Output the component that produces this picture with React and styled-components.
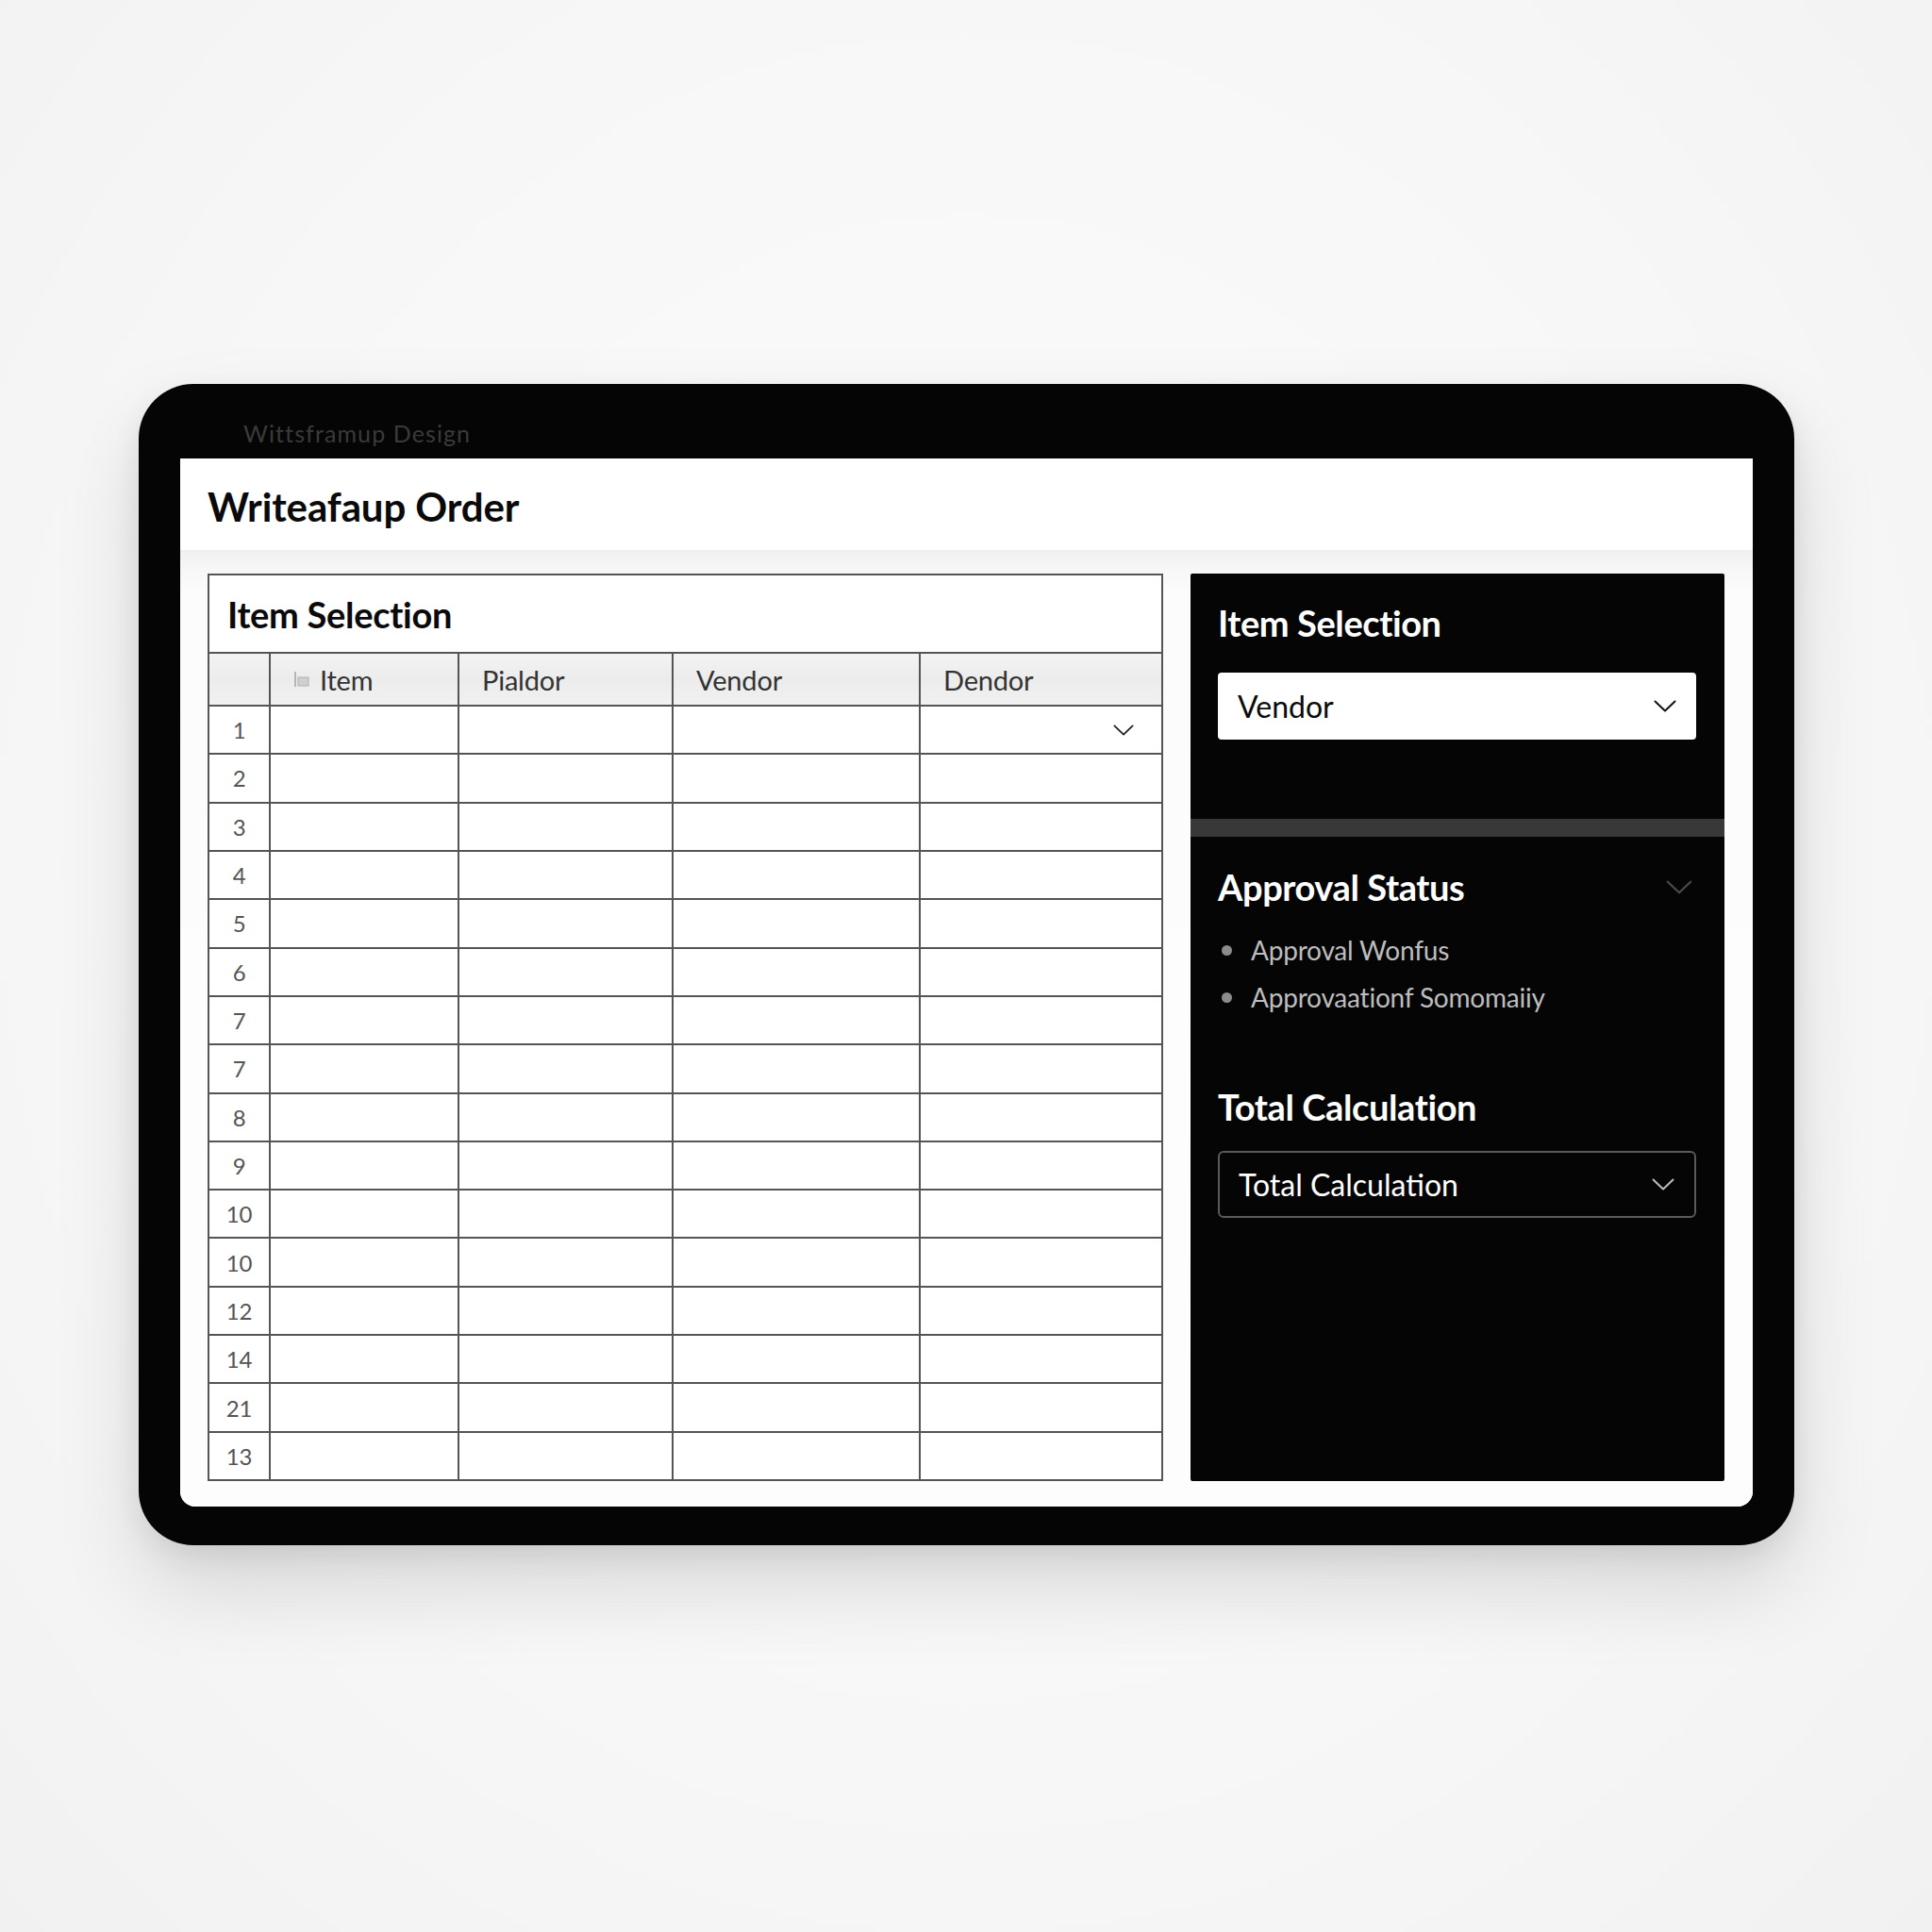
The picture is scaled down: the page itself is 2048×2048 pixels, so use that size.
import styled, { createGlobalStyle } from "styled-components";

const GlobalStyle = createGlobalStyle`
  html, body {
    margin: 0;
    padding: 0;
    background: #f6f6f6;
    font-family: Lato, "Open Sans", "Liberation Sans", sans-serif;
  }
  * { box-sizing: border-box; }
`;

const Page = styled.div`
  width: 2048px;
  height: 2048px;
  padding: 407px 0 0 147px;
  background: radial-gradient(ellipse at 50% 45%, #fcfcfc 0%, #f7f7f7 60%, #f1f1f1 100%);
`;

const Frame = styled.div`
  width: 1755px;
  height: 1231px;
  background: #050505;
  border-radius: 58px;
  padding: 0 44px 41px 44px;
  display: flex;
  flex-direction: column;
  box-shadow: 0 45px 90px rgba(0, 0, 0, 0.13), 0 12px 30px rgba(0, 0, 0, 0.08);
`;

const TopBar = styled.div`
  height: 79px;
  flex: none;
  padding: 38px 0 0 67px;
  font-size: 25px;
  line-height: 28px;
  color: #3a3a3a;
  letter-spacing: 1.1px;
`;

const Screen = styled.div`
  flex: 1;
  background: #fff;
  border-radius: 0 0 16px 16px;
  display: flex;
  flex-direction: column;
  overflow: hidden;
`;

const TitleBar = styled.div`
  height: 97px;
  flex: none;
  padding: 30px 0 0 29px;
`;

const Title = styled.h1`
  margin: 0;
  font-size: 42px;
  line-height: 1;
  font-weight: 700;
  color: #0a0a0a;
  letter-spacing: -0.1px;
`;

const Body = styled.div`
  flex: 1;
  display: flex;
  gap: 29px;
  padding: 25px 30px 27px 29px;
  background: linear-gradient(#f0f0f0 0px, #f7f7f7 22px, #fcfcfc 45px, #fdfdfd 100%);
`;

const Sheet = styled.div`
  width: 1013px;
  flex: none;
  background: #fff;
  border: 2px solid #555;
  display: flex;
  flex-direction: column;
`;

const SheetTitle = styled.div`
  height: 83px;
  flex: none;
  display: flex;
  align-items: center;
  padding-left: 19px;
  border-bottom: 2px solid #555;
  font-size: 38px;
  font-weight: 700;
  color: #0a0a0a;
  letter-spacing: -0.3px;
`;

const Row = styled.div`
  display: grid;
  grid-template-columns: 65px 200px 227px 262px 1fr;
  flex: ${(p) => (p.$head ? "none" : "1")};
  height: ${(p) => (p.$head ? "56px" : "auto")};
  border-bottom: ${(p) => (p.$last ? "none" : "2px solid #555")};
  background: ${(p) =>
    p.$head ? "linear-gradient(#f3f3f3, #ececec 50%, #f1f1f1)" : "#fff"};
`;

const Cell = styled.div`
  display: flex;
  align-items: center;
  justify-content: ${(p) => (p.$num ? "center" : "flex-start")};
  gap: 8px;
  padding-left: ${(p) => (p.$num ? "0" : "24px")};
  padding-right: ${(p) => (p.$num ? "0" : "29px")};
  border-right: ${(p) => (p.$end ? "none" : "2px solid #555")};
  font-size: ${(p) => (p.$num ? "24px" : "29px")};
  color: ${(p) => (p.$num ? "#555" : "#333")};
  letter-spacing: -0.2px;
`;

const RowChevron = styled.span`
  margin-left: auto;
  display: flex;
  color: #222;
`;

const Panel = styled.div`
  flex: 1;
  background: #050505;
  display: flex;
  flex-direction: column;
  border-radius: 2px;
`;

const Section = styled.div`
  padding: ${(p) => p.$pad || "0 30px 0 29px"};
`;

const Heading = styled.div`
  display: flex;
  align-items: center;
  justify-content: space-between;
  font-size: 38px;
  line-height: 1;
  font-weight: 700;
  color: #fff;
  letter-spacing: -0.4px;
  margin-bottom: ${(p) => p.$mb || "0"};
`;

const Select = styled.div`
  height: 71px;
  border-radius: ${(p) => (p.$dark ? "6px" : "4px")};
  background: ${(p) => (p.$dark ? "#050505" : "#fff")};
  border: ${(p) => (p.$dark ? "2px solid #5a5a5a" : "none")};
  color: ${(p) => (p.$dark ? "#fff" : "#0a0a0a")};
  display: flex;
  align-items: center;
  justify-content: space-between;
  padding: 0 21px 0 ${(p) => (p.$dark ? "20px" : "21px")};
  font-size: 32px;
  letter-spacing: 0;
`;

const Band = styled.div`
  height: 19px;
  background: #383838;
  margin: 84px 0 34px;
`;

const List = styled.ul`
  list-style: none;
  margin: 23px 0 72px;
  padding: 0;
`;

const Item = styled.li`
  height: 50px;
  display: flex;
  align-items: center;
  gap: 20px;
  padding-left: 4px;
  font-size: 28px;
  color: #bdbdbd;
  letter-spacing: -0.2px;

  &::before {
    content: "";
    width: 11px;
    height: 11px;
    border-radius: 50%;
    background: #8c8c8c;
  }
`;

const Chevron = ({ color = "currentColor", w = 24 }) => (
  <svg width={w} height={Math.round(w * 0.55)} viewBox="0 0 24 13" fill="none">
    <polyline points="1.5,1.5 12,11.5 22.5,1.5" stroke={color} strokeWidth="2" strokeLinecap="round" strokeLinejoin="round" />
  </svg>
);

const ItemIcon = () => (
  <svg width="20" height="18" viewBox="0 0 20 18" fill="none">
    <rect x="1" y="1" width="2" height="16" fill="#b5b5b5" />
    <rect x="5" y="7" width="11" height="9" fill="#cfcfcf" stroke="#b0b0b0" strokeWidth="1" />
  </svg>
);

const rowNumbers = ["1", "2", "3", "4", "5", "6", "7", "7", "8", "9", "10", "10", "12", "14", "21", "13"];
const headers = ["Item", "Pialdor", "Vendor", "Dendor"];

export default function App() {
  return (
    <>
      <GlobalStyle />
      <Page>
        <Frame>
          <TopBar>Wittsframup Design</TopBar>
          <Screen>
            <TitleBar>
              <Title>Writeafaup Order</Title>
            </TitleBar>
            <Body>
              <Sheet>
                <SheetTitle>Item Selection</SheetTitle>
                <Row $head>
                  <Cell $num />
                  {headers.map((h, i) => (
                    <Cell key={h} $end={i === headers.length - 1}>
                      {i === 0 && <ItemIcon />}
                      {h}
                    </Cell>
                  ))}
                </Row>
                {rowNumbers.map((n, r) => (
                  <Row key={r} $last={r === rowNumbers.length - 1}>
                    <Cell $num>{n}</Cell>
                    <Cell />
                    <Cell />
                    <Cell />
                    <Cell $end>
                      {r === 0 && (
                        <RowChevron>
                          <Chevron w={22} />
                        </RowChevron>
                      )}
                    </Cell>
                  </Row>
                ))}
              </Sheet>

              <Panel>
                <Section $pad="33px 30px 0 29px">
                  <Heading $mb="34px">Item Selection</Heading>
                  <Select>
                    Vendor
                    <Chevron color="#111" />
                  </Select>
                </Section>
                <Band />
                <Section>
                  <Heading>
                    Approval Status
                    <span style={{ display: "flex", marginRight: 4 }}>
                      <Chevron color="#4a4a4a" w={28} />
                    </span>
                  </Heading>
                  <List>
                    <Item>Approval Wonfus</Item>
                    <Item>Approvaationf Somomaiiy</Item>
                  </List>
                  <Heading $mb="28px">Total Calculation</Heading>
                  <Select $dark>
                    Total Calculation
                    <Chevron color="#bdbdbd" />
                  </Select>
                </Section>
              </Panel>
            </Body>
          </Screen>
        </Frame>
      </Page>
    </>
  );
}
